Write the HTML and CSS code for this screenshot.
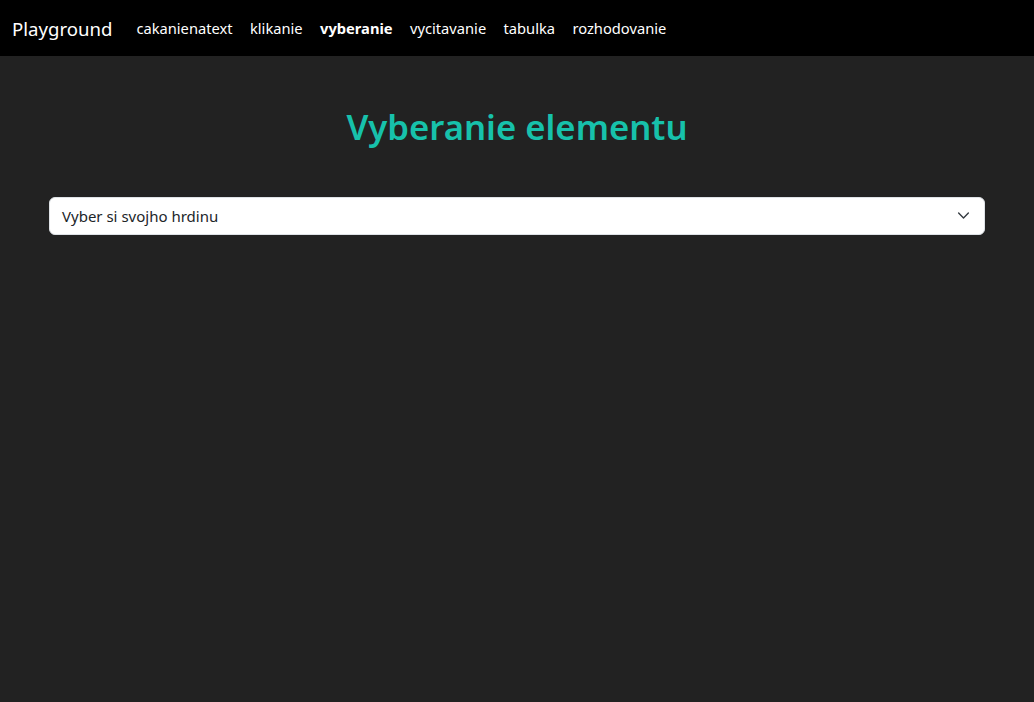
FILE: index.html
```html
<!DOCTYPE html>
<html lang="sk">
<head>
<meta charset="utf-8">
<title>Playground</title>
<link rel="stylesheet" href="styles.css">
</head>
<body>
<nav class="navbar">
  <a class="brand" href="#">Playground</a>
  <ul class="nav">
    <li><a href="#">cakanienatext</a></li>
    <li><a href="#">klikanie</a></li>
    <li><a href="#" class="active">vyberanie</a></li>
    <li><a href="#">vycitavanie</a></li>
    <li><a href="#">tabulka</a></li>
    <li><a href="#">rozhodovanie</a></li>
  </ul>
</nav>
<main class="container">
  <h1 class="title">Vyberanie elementu</h1>
  <div class="select">
    <span class="select-text">Vyber si svojho hrdinu</span>
    <svg class="chevron" width="16" height="16" viewBox="0 0 16 16"><path d="M2 5l6 6 6-6" fill="none" stroke="#343a40" stroke-width="2" stroke-linecap="round" stroke-linejoin="round"/></svg>
  </div>
</main>
</body>
</html>
```
FILE: styles.css
```css
* { box-sizing: border-box; }
html, body { margin: 0; padding: 0; }
body {
  background: #222222;
  font-family: "Noto Sans", "Open Sans", sans-serif;
  color: #212529;
  min-height: 702px;
}
.navbar {
  background: #000;
  height: 56px;
  display: flex;
  align-items: center;
  padding: 0 12px;
}
.brand {
  color: #fff;
  text-decoration: none;
  font-size: 18.6px;
  margin-right: 16px;
}
.nav {
  list-style: none;
  margin: 0;
  padding: 0;
  display: flex;
}
.nav a {
  display: block;
  color: #fff;
  text-decoration: none;
  font-size: 14.7px;
  padding: 8px 8.7px;
}
.nav li:first-child a { padding-left: 8px; }
.nav a.active { font-weight: 700; }
.container {
  width: 960px;
  margin: 0 auto;
  padding: 50px 12px 0;
}
.title {
  margin: 0 0 49px;
  text-align: center;
  color: #17c1ab;
  font-size: 34.7px;
  font-weight: 600;
  line-height: 1.2;
}
.select {
  height: 38px;
  background: #fff;
  border: 1px solid #dee2e6;
  border-radius: 6px;
  display: flex;
  align-items: center;
  justify-content: space-between;
  padding: 0 14px 0 12px;
  font-size: 15px;
  color: #212529;
}
.chevron { width: 13px; height: 13px; }
.chevron path { stroke-width: 1.7; }
```
